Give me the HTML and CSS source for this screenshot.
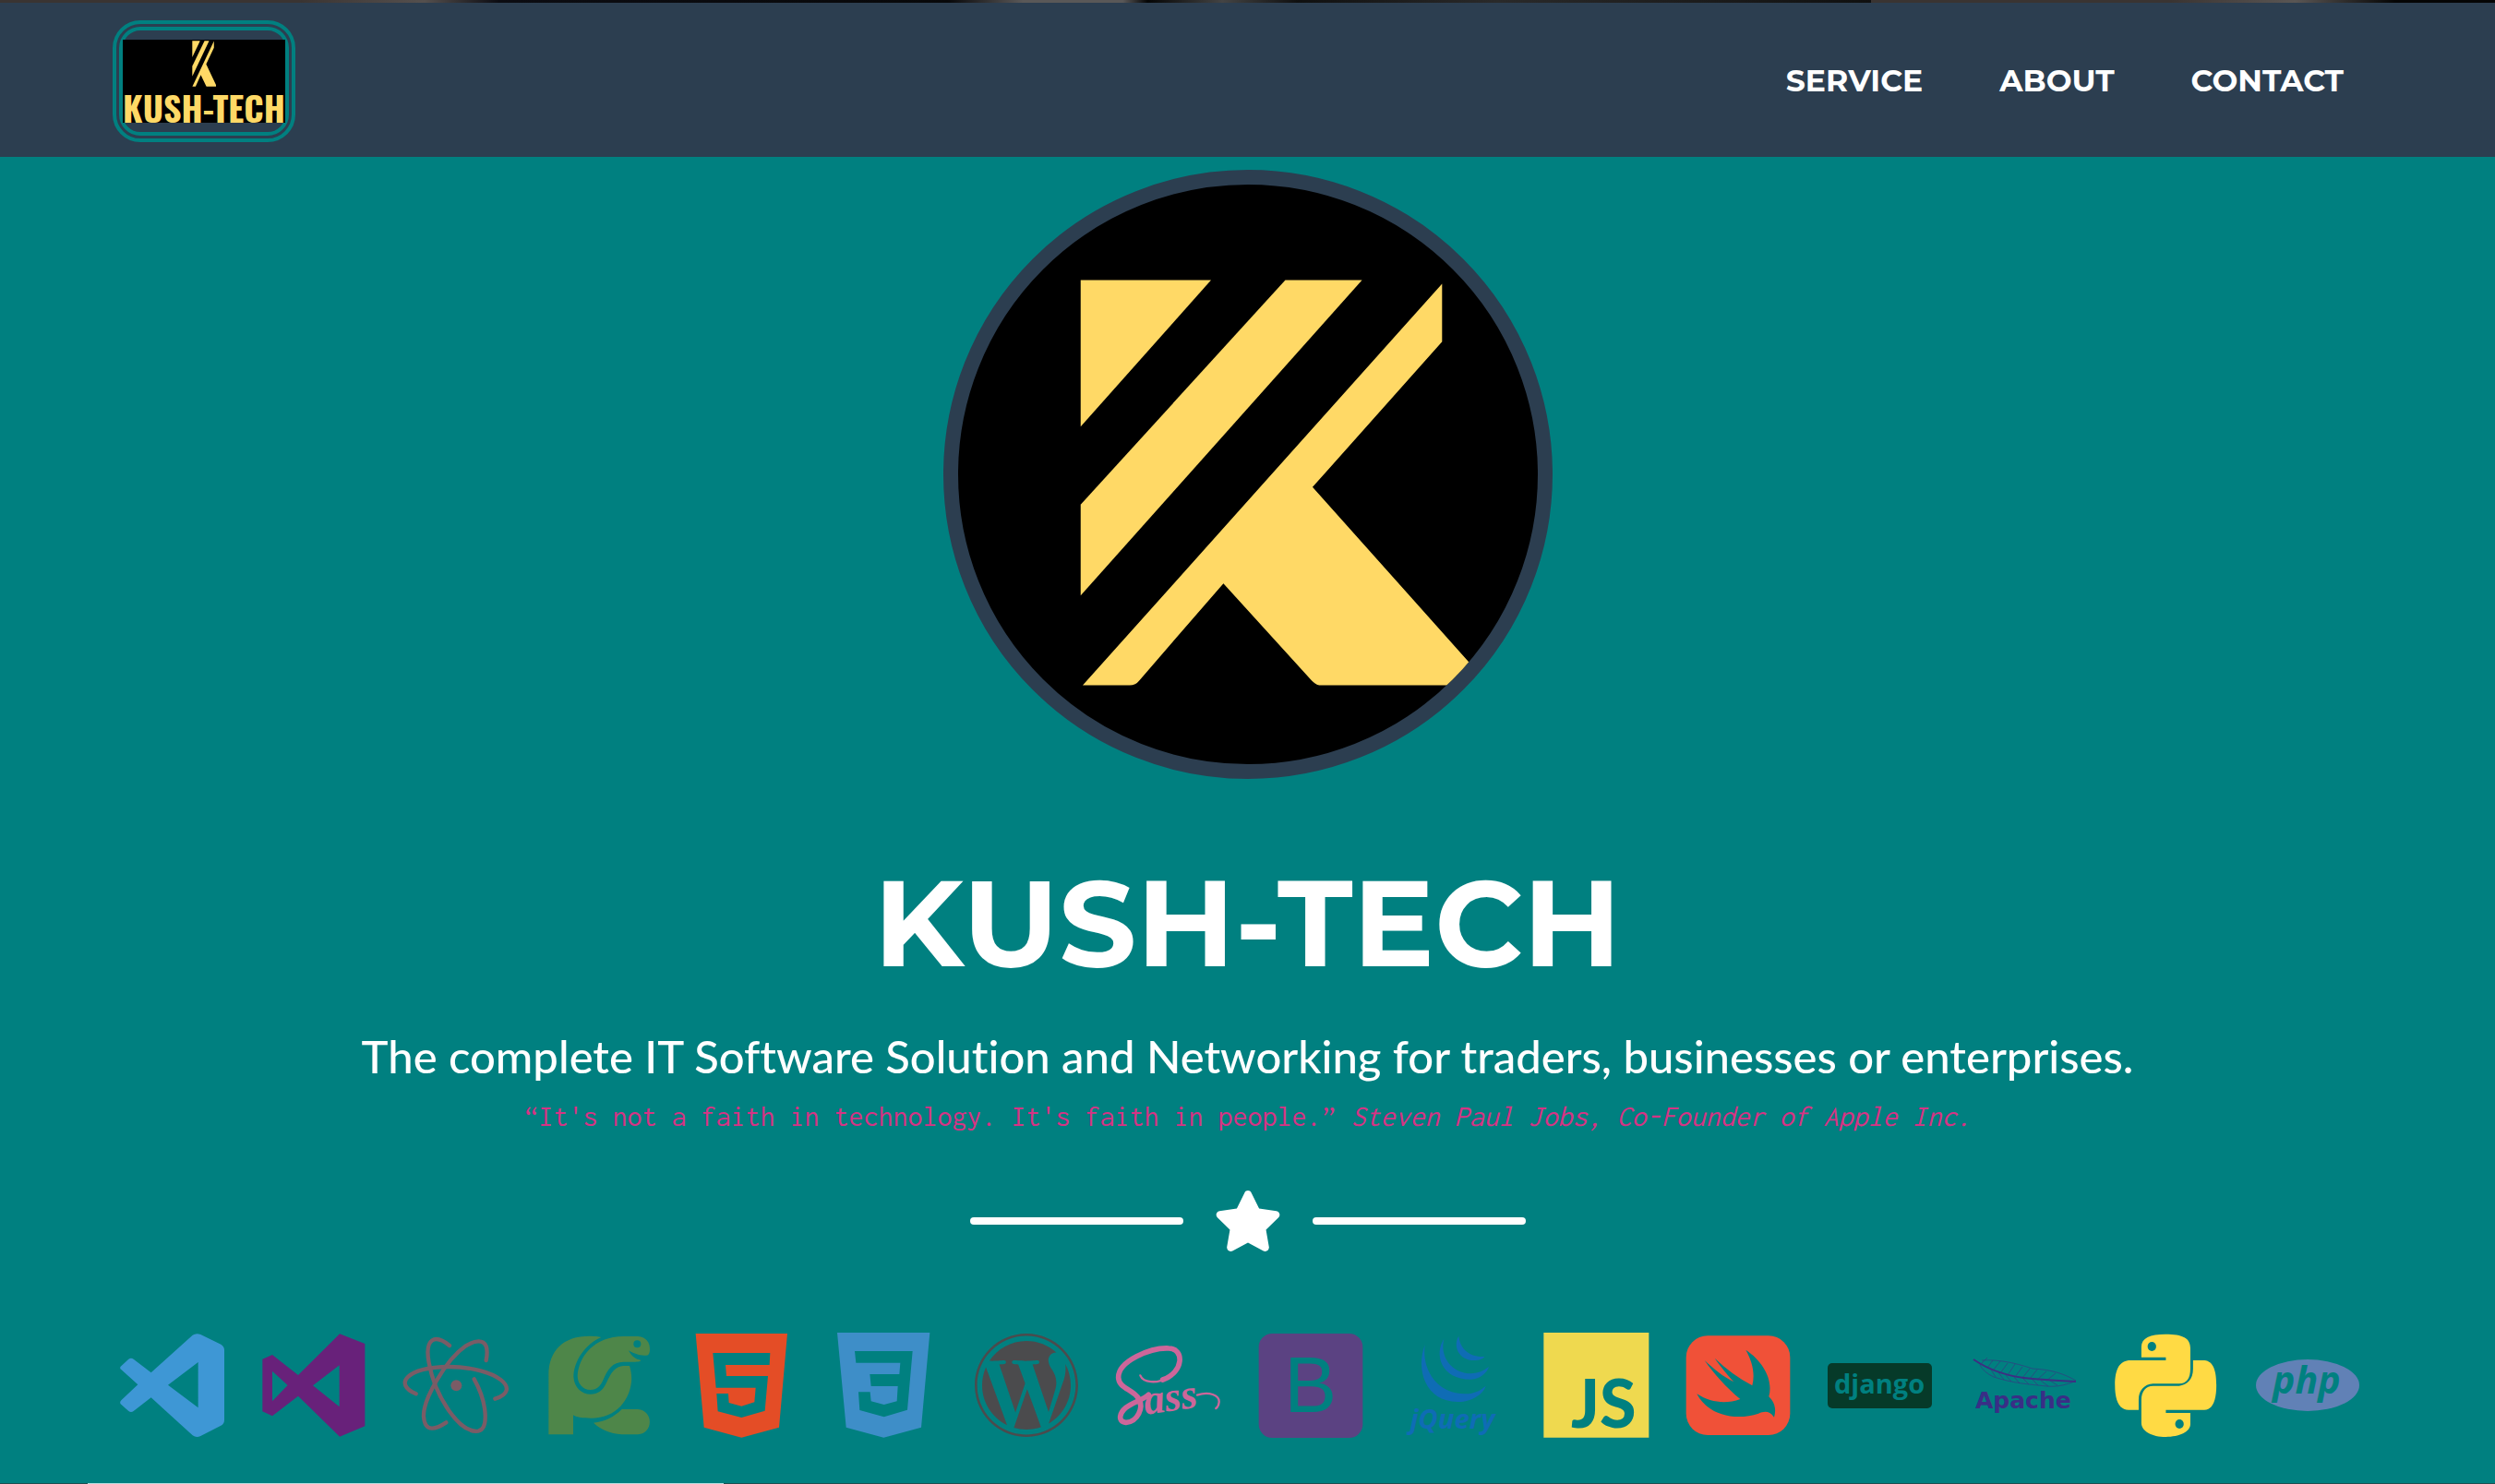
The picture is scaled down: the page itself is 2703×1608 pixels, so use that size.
FILE: index.html
```html
<!DOCTYPE html>
<html lang="en">
<head>
<meta charset="utf-8">
<meta name="viewport" content="width=device-width, initial-scale=1">
<title>KUSH-TECH</title>
<link rel="stylesheet" href="styles.css">
</head>
<body>
<div class="top-edge"></div>
<header class="navbar">
  <a class="brand" href="#top" aria-label="KUSH-TECH home">
    <span class="brand-image">
      <svg class="brand-mark" viewBox="370 300 970 1005" preserveAspectRatio="none" aria-hidden="true"><use href="#k-mark"/></svg>
      <span class="brand-text">KUSH-TECH</span>
    </span>
  </a>
  <nav class="menu">
    <a href="#service">SERVICE</a>
    <a href="#about">ABOUT</a>
    <a href="#contact">CONTACT</a>
  </nav>
</header>

<main class="hero" id="top">
  <svg class="avatar" viewBox="84 68 1405 1427" preserveAspectRatio="none" role="img" aria-label="KUSH-TECH emblem">
    <g id="k-mark" fill="#ffd966">
      <path d="M381 303H697L381 664Z"/>
      <path d="M877 303H1063L381 1080V856Z"/>
      <path d="M1257 312V455L943 813L1345 1270V1301H959Q948 1298 938 1286L727 1050L524 1288Q514 1301 500 1301H386Z"/>
    </g>
  </svg>
  <h1 class="title">KUSH-TECH</h1>
  <p class="tagline">The complete IT Software Solution and Networking for traders, businesses or enterprises.</p>
  <code class="quote">“It's not a faith in technology. It's faith in people.” <em>Steven Paul Jobs, Co-Founder of Apple Inc.</em></code>
  <div class="divider">
    <span class="divider-line"></span>
    <svg class="divider-star" viewBox="0 0 576 512" aria-hidden="true"><path fill="#fff" d="M259.3 17.8L194 150.2 47.9 171.5c-26.2 3.8-36.7 36.1-17.7 54.6l105.7 103-25 145.5c-4.5 26.3 23.2 46 46.4 33.7L288 439.6l130.7 68.7c23.2 12.2 50.9-7.4 46.4-33.7l-25-145.5 105.7-103c19-18.5 8.5-50.8-17.7-54.6L382 150.2 316.7 17.8c-11.7-23.6-45.6-23.9-57.4 0z"/></svg>
    <span class="divider-line"></span>
  </div>
  <ul class="tools">
    <li><svg viewBox="15 27 432 432" role="img" aria-label="Visual Studio Code"><path fill="#3e97d5" fill-rule="evenodd" d="M62 182Q58 188 64 192L118 241L64 292Q58 298 62 304L88 327Q96 333 104 327L161 283L296 406Q308 415 322 408L388 374Q399 368 399 356V128Q399 117 388 110L322 78Q308 72 296 80L161 202L104 158Q96 152 88 158ZM314 168L216 242L314 316Z"/></svg></li>
    <li><svg viewBox="478 27 432 432" role="img" aria-label="Visual Studio"><path fill="#68217a" fill-rule="evenodd" d="M524 158L556 144L640 210L775 76L857 108V376L775 410L640 278L556 343L524 328ZM556 197V295L606 243ZM774 178L688 244L774 313Z"/></svg></li>
    <li><svg viewBox="940 27 432 432" role="img" aria-label="Atom"><g fill="none" stroke="#7a5c66" stroke-width="13" stroke-linecap="round"><path d="M1023 271C950 240 990 185 1130 183C1290 184 1370 260 1280 287"/><path d="M1132 114C1085 75 1050 90 1065 170C1085 280 1165 400 1225 392C1260 385 1255 300 1212 223"/><path d="M1251 162C1263 100 1235 85 1185 115C1120 160 1045 290 1048 345C1052 400 1090 385 1121 364"/></g><circle cx="1154" cy="244" r="18" fill="#7a5c66"/></svg></li>
    <li><svg viewBox="53 27 432 432" role="img" aria-label="PyCharm"><g fill="#4e8649"><path d="M102 403V210C102 130 150 83 235 83Q260 83 273 87C220 110 184 165 183 215C185 250 210 272 238 272C262 272 278 262 290 235C305 200 320 182 345 180H365C372 200 373 225 370 240C360 300 315 350 240 350C215 350 195 348 182 340V403Z"/><path d="M345 84H392C420 86 432 105 431 128Q431 146 418 146C395 147 380 140 362 130C372 150 385 158 402 162C400 167 390 167 370 167H345C310 168 295 190 282 220C270 248 260 258 238 258C212 258 196 235 196 212C200 150 250 84 345 84Z"/><path d="M340 321H392C444 325 444 400 392 403H340C300 400 270 385 248 365C285 362 315 345 340 321Z"/></g><circle cx="390" cy="109" r="12" fill="#008080"/></svg></li>
    <li><svg viewBox="515 27 432 432" role="img" aria-label="HTML5"><path fill="#e44d26" fill-rule="evenodd" d="M580 75H878L851 380L729 413L607 380ZM636 138L646 251H775L771 298L729 311L688 300L686 270H648L652 328L729 348L805 326L815 213H680L677 177H820L822 138Z"/></svg></li>
    <li><svg viewBox="978 27 432 432" role="img" aria-label="CSS3"><path fill="#3e8ec8" fill-rule="evenodd" d="M1041 72H1342L1314 380L1192 413L1070 380ZM1098 132L1102 170H1246L1243 207H1147L1151 246H1238L1235 295L1193 306L1151 295L1148 265H1110L1114 324L1193 346L1269 323L1286 132Z"/></svg></li>
    <li><svg viewBox="-63 -63 638 638" role="img" aria-label="WordPress"><path fill="#4b4b4d" d="M61.7 169.4l101.5 278C92.2 413 43.3 340.2 43.3 256c0-30.9 6.6-60.1 18.4-86.6zm337.9 75.9c0-26.3-9.4-44.5-17.5-58.7-10.8-17.5-20.9-32.4-20.9-49.9 0-19.6 14.8-37.8 35.7-37.8.9 0 1.8.1 2.8.2-37.9-34.7-88.3-55.9-143.7-55.9-74.3 0-139.7 38.1-177.8 95.9 5 .2 9.7.3 13.7.3 22.2 0 56.7-2.7 56.7-2.7 11.5-.7 12.8 16.2 1.4 17.5 0 0-11.5 1.3-24.3 2l77.5 230.4L249.8 247l-33.1-90.8c-11.5-.7-22.3-2-22.3-2-11.5-.7-10.1-18.2 1.3-17.5 0 0 35.1 2.7 56 2.7 22.2 0 56.7-2.7 56.7-2.7 11.5-.7 12.8 16.2 1.4 17.5 0 0-11.5 1.3-24.3 2l76.9 228.7 21.2-70.9c9-29.4 16-50.5 16-68.7zm-139.9 29.3l-63.8 185.5c19.1 5.6 39.2 8.7 60.1 8.7 24.8 0 48.5-4.3 70.6-12.1-.6-.9-1.1-1.9-1.5-2.9l-65.4-179.2zm183-120.7c.9 6.8 1.4 14 1.4 21.9 0 21.6-4 45.8-16.2 76.2l-65 187.9C426.2 403 468.7 334.5 468.7 256c0-37-9.4-71.8-26-102.1zM504 256c0 136.8-111.3 248-248 248C119.2 504 8 392.7 8 256 8 119.2 119.2 8 256 8c136.7 0 248 111.2 248 248zm-11.4 0c0-130.5-106.2-236.6-236.6-236.6C125.5 19.4 19.4 125.5 19.4 256S125.6 492.6 256 492.6c130.5 0 236.6-106.1 236.6-236.6z"/></svg></li>
    <li><svg viewBox="523 27 432 432" role="img" aria-label="Sass"><g fill="none" stroke="#cd669a" stroke-linecap="round"><path stroke-width="7" d="M647 211C656 234 700 240 735 218"/><path stroke-width="17" d="M720 225C790 200 790 124 740 123C680 120 575 165 576 218C577 250 615 255 637 280C665 315 635 365 600 364C570 362 580 325 612 308C640 292 660 288 674 274"/><path stroke-width="7" d="M832 275C870 262 905 275 903 298Q902 312 893 318"/></g><text class="sass-text" x="664" y="338" transform="rotate(-8 664 338)">ass</text></svg></li>
    <li><svg viewBox="986 27 432 432" role="img" aria-label="Bootstrap"><rect x="1030" y="75" width="338" height="339" rx="44" fill="#5b4282"/><text class="bootstrap-text" x="1113" y="330">B</text></svg></li>
    <li><svg viewBox="68 27 432 432" role="img" aria-label="jQuery"><path fill="#0f6cb5" d="M190 112C160 190 190 297 297 297C345 297 380 270 388 245C360 270 330 275 290 268C225 255 180 190 190 112ZM252 92C220 140 240 224 340 224C370 222 390 205 398 183C370 205 340 210 310 200C265 185 240 140 252 92ZM300 83C280 115 300 162 350 162C365 162 378 158 384 150C340 152 305 130 300 83Z"/><text class="jquery-text" x="142" y="383">jQuery</text></svg></li>
    <li><svg viewBox="531 27 432 432" role="img" aria-label="JavaScript"><path fill="#efd94f" d="M577 72H919V413H577Z"/><text class="js-text" x="666" y="380">JS</text></svg></li>
    <li><svg viewBox="993 27 432 432" role="img" aria-label="Swift"><rect x="1040" y="82" width="338" height="323" rx="70" fill="#f05138"/><path fill="#008080" d="M1234 128C1290 165 1324 225 1309 280C1330 300 1333 325 1326 347C1310 325 1295 327 1275 335C1200 360 1110 340 1075 271C1120 300 1170 305 1216 288C1170 250 1130 205 1100 162C1130 190 1160 215 1195 232C1175 210 1150 180 1133 155C1170 190 1210 220 1255 244C1265 205 1255 165 1234 128Z"/></svg></li>
    <li><svg viewBox="0 0 144 144" role="img" aria-label="Django"><rect x="15" y="48" width="113" height="49" rx="5" fill="#063a29"/><text class="django-text" x="22" y="81">django</text></svg></li>
    <li><svg viewBox="0 0 144 144" role="img" aria-label="Apache"><g fill="none" stroke="#3d2e82"><path stroke-width="2" d="M19 44Q45 62 83 65Q108 67 130 68"/><path stroke-width="1" opacity=".6" d="M28 45C45 44 62 47 83 54C104 55 118 60 130 67C120 72 108 74 98 73C80 71 62 70 41 63Q30 58 26 50L34 42M34 53L40 45M40 56L48 46M48 59L56 48M56 61L64 49M64 63L72 52M72 64L80 54M80 65L88 55M88 66L98 57M98 67L108 59M38 55L43 63M46 58L52 66M54 61L60 68M63 63L69 70M72 64L79 71M82 65L89 72M92 67L100 73M102 67L110 72"/></g><text class="apache-text" x="21" y="97">Apache</text></svg></li>
    <li><svg viewBox="769 27 342 432" preserveAspectRatio="none" role="img" aria-label="Python"><path fill="#ffda44" d="M878 152V118C878 90 900 77 940 77C985 77 1004 90 1004 122V190C1004 220 995 238 975 238H908C885 240 871 260 871 290V323H845C820 323 810 290 810 243C810 190 822 162 850 162H941V152ZM1011 162H1040C1065 165 1071 200 1071 243C1071 290 1062 323 1040 323H941V333H1004V370C1004 395 975 411 941 411C905 411 878 392 878 365V290C878 262 890 245 908 245H975C995 243 1011 225 1011 190Z"/><g fill="#008080"><ellipse cx="905" cy="117" rx="11" ry="15"/><ellipse cx="976" cy="369" rx="11" ry="15"/></g></svg></li>
    <li><svg viewBox="0 0 144 144" role="img" aria-label="PHP"><ellipse cx="72" cy="72" rx="56" ry="28" fill="#6181b6"/><text class="php-text" x="34" y="81">php</text></svg></li>
  </ul>
</main>
<footer class="page-edge"></footer>
</body>
</html>
```
FILE: styles.css
```css
* { box-sizing: border-box; }

body {
  margin: 0;
  min-height: 100vh;
  display: flex;
  flex-direction: column;
  background: #008080;
  color: #fff;
  font-family: Lato, "Open Sans", sans-serif;
}

.top-edge {
  height: 3px;
  background: linear-gradient(90deg, #3a3432 0, #3a3432 12%, #55504e 17%, #0c0c12 20%, #08080a 38%, #5a5858 41%, #5a5858 45%, #050505 46%, #444 49%, #101010 52%, #2a2a2a 60%, #101010 75%, #3a3432 75%, #3a3432 87%, #5a5654 92%, #050505 96%);
}

/* Navigation */
.navbar {
  display: flex;
  justify-content: space-between;
  align-items: center;
  padding: 19px 164px 16px 122px;
  background: #2c3e50;
}

.brand {
  display: block;
  padding: 10px 0;
  border: 11px double #008080;
  border-radius: 30px;
  color: #ffd966;
  text-decoration: none;
}

.brand-image {
  display: flex;
  flex-direction: column;
  align-items: center;
  justify-content: space-between;
  width: 176px;
  height: 90px;
  background: #000;
}

.brand-mark {
  flex: none;
  width: 26px;
  height: 50px;
  margin-top: 1px;
}

.brand-text {
  font: 700 38px/34px Oswald, "Liberation Sans", sans-serif;
  white-space: nowrap;
}

.menu {
  display: flex;
  gap: 83px;
  padding-bottom: 2px;
}

.menu a {
  color: #fff;
  font: 700 33px/48px Montserrat, Inter, sans-serif;
  text-decoration: none;
}

/* Hero */
.hero {
  flex: 1;
  display: flex;
  flex-direction: column;
  align-items: center;
  padding-top: 14px;
}

.avatar {
  width: 660px;
  height: 660px;
  border: 16px solid #2c3e50;
  border-radius: 50%;
  background: #000;
}

.title {
  margin: 80px 0 0;
  font: 700 132px/152px Montserrat, Inter, sans-serif;
}

.tagline {
  margin: 38px 0 0;
  font-size: 49px;
  font-weight: 500;
  font-variant-ligatures: none;
  line-height: 60px;
  text-align: center;
}

.quote {
  margin-top: 16px;
  color: #d63384;
  font: 32px/40px Inconsolata, "Liberation Mono", monospace;
}

.divider {
  display: flex;
  align-items: center;
  gap: 33px;
  margin-top: 60px;
}

.divider-line {
  width: 231px;
  height: 8px;
  border-radius: 4px;
  background: #fff;
}

.divider-star {
  width: 74px;
  height: 66px;
}

/* Technology logos */
.tools {
  display: flex;
  justify-content: space-between;
  align-self: stretch;
  margin: 73px 0 0;
  padding: 0 131px 0 115px;
  list-style: none;
}

.tools li { flex: 0 1 144px; }

.tools svg {
  display: block;
  width: 100%;
  height: auto;
  aspect-ratio: 1;
}

.sass-text { fill: #cd669a; font: italic 700 136px "Liberation Serif", serif; }
.bootstrap-text { fill: #008080; font: 256px "Liberation Sans", sans-serif; }
.jquery-text { fill: #0f6cb5; font: italic 700 88px "Open Sans", sans-serif; }
.js-text { fill: #008080; font: 900 215px Lato, sans-serif; }
.django-text { fill: #008080; font: 700 29px "Open Sans", sans-serif; }
.apache-text { fill: #392e86; font: 700 25px "DejaVu Sans", sans-serif; }
.php-text { fill: #008080; font: italic 700 41px "Open Sans", sans-serif; }

.page-edge {
  height: 1px;
  background: linear-gradient(90deg, #1d4f50 3.5%, #b5dede 3.5%, #b5dede 29%, #1d4f50 29%);
}
```
